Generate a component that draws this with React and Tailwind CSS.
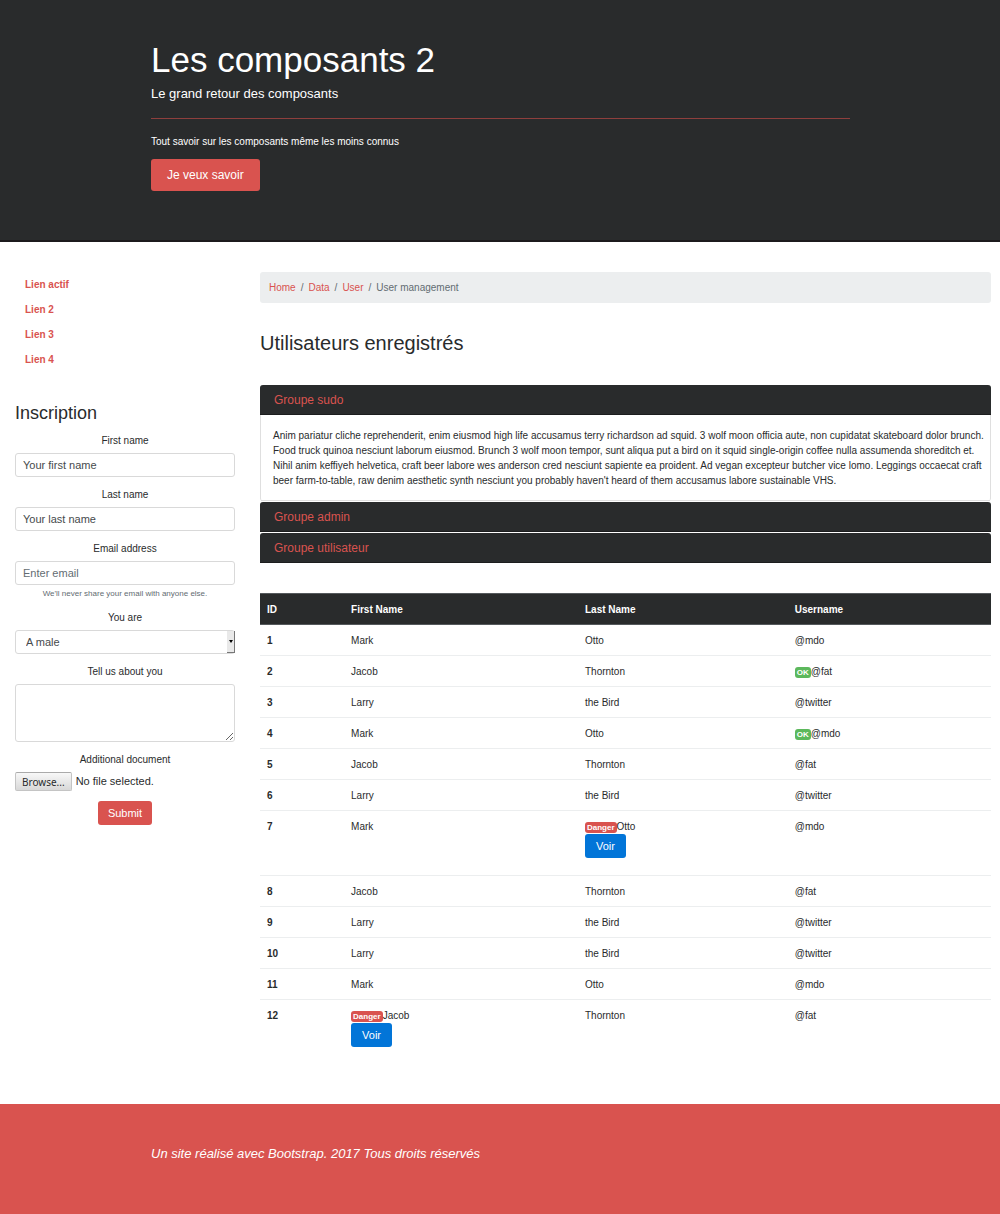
import React from 'react';

const links = ['Lien actif', 'Lien 2', 'Lien 3', 'Lien 4'];
const crumbs = ['Home', 'Data', 'User'];

const rows = [
  { id: 1, first: 'Mark', last: 'Otto', user: '@mdo' },
  { id: 2, first: 'Jacob', last: 'Thornton', user: '@fat', ok: true },
  { id: 3, first: 'Larry', last: 'the Bird', user: '@twitter' },
  { id: 4, first: 'Mark', last: 'Otto', user: '@mdo', ok: true },
  { id: 5, first: 'Jacob', last: 'Thornton', user: '@fat' },
  { id: 6, first: 'Larry', last: 'the Bird', user: '@twitter' },
  { id: 7, first: 'Mark', last: 'Otto', user: '@mdo', danger: 'last' },
  { id: 8, first: 'Jacob', last: 'Thornton', user: '@fat' },
  { id: 9, first: 'Larry', last: 'the Bird', user: '@twitter' },
  { id: 10, first: 'Larry', last: 'the Bird', user: '@twitter' },
  { id: 11, first: 'Mark', last: 'Otto', user: '@mdo' },
  { id: 12, first: 'Jacob', last: 'Thornton', user: '@fat', danger: 'first' },
];

const fieldClass =
  'block w-full rounded-[3px] border border-[#d9d9d9] bg-white text-[11px] text-[#464a4c]';

function Field({ id, label, children }) {
  return (
    <div className="mb-[10px]">
      <label htmlFor={id} className="mb-[5px] block text-center leading-[15px]">
        {label}
      </label>
      {children}
    </div>
  );
}

function DangerCell({ name }) {
  return (
    <td className="px-[7px] pt-2 pb-[17px] align-top">
      <div>
        <span className="inline-block rounded-[3px] bg-[#d9534f] px-[2px] text-[8px] leading-[11px] font-bold text-white">
          Danger
        </span>
        {name}
      </div>
      <button
        type="button"
        className="block h-6 rounded-[3px] bg-[#0275d8] px-[11px] text-[11px] leading-[22px] text-white"
      >
        Voir
      </button>
    </td>
  );
}

function Cell({ children }) {
  return <td className="px-[7px] pt-2 pb-[7px] align-top">{children}</td>;
}

function Group({ title, children }) {
  return (
    <div className="mb-px rounded-[3px] border-x border-[#dfdfdf]">
      <h5 className="-mx-px h-[30px] rounded-t-[3px] border-b border-[#1c1d1e] bg-[#292b2c] px-[14px] text-[12px] leading-[30px]">
        <a href="#groupe" className="text-[#d9534f]">
          {title}
        </a>
      </h5>
      {children}
    </div>
  );
}

export default function App() {
  return (
    <div className="bg-white font-['Liberation_Sans',Arial,sans-serif] text-[10px] leading-[15px] text-[#292b2c]">
      <header className="border-b-2 border-[#1c1a1d] bg-[#292b2c] pt-[39px] pb-[49px] text-white">
        <div className="mx-auto w-[70%] pl-px">
          <h1 className="text-[35px] leading-[42px]">Les composants 2</h1>
          <p className="mt-1 text-[13px] leading-[18px]">Le grand retour des composants</p>
          <hr className="mt-[15px] mb-[15px] border-[#8e3f3d]" />
          <p>Tout savoir sur les composants même les moins connus</p>
          <button
            type="button"
            className="mt-[10px] block h-8 rounded-[3px] bg-[#d9534f] px-4 text-[12px] leading-[32px]"
          >
            Je veux savoir
          </button>
        </div>
      </header>

      <div className="grid grid-cols-[1fr_3fr] pt-[30px] pb-10">
        <aside className="px-[15px]">
          <nav className="flex flex-col">
            {links.map((l) => (
              <a key={l} href="#lien" className="px-[10px] py-[5px] font-bold text-[#d9534f]">
                {l}
              </a>
            ))}
          </nav>

          <form className="mt-[30px]">
            <h3 className="mb-[9px] text-[18px] leading-[22px]">Inscription</h3>
            <Field id="first" label="First name">
              <input
                id="first"
                type="text"
                placeholder="Your first name"
                className={fieldClass + ' h-6 px-[7px] placeholder:text-[#464a4c]'}
              />
            </Field>
            <Field id="last" label="Last name">
              <input
                id="last"
                type="text"
                placeholder="Your last name"
                className={fieldClass + ' h-6 px-[7px] placeholder:text-[#464a4c]'}
              />
            </Field>
            <Field id="email" label="Email address">
              <input
                id="email"
                type="email"
                placeholder="Enter email"
                className={fieldClass + ' h-6 px-[7px] placeholder:text-[#636c72]'}
              />
              <small className="mt-[3px] block text-center text-[8px] leading-[12px] text-[#636c72]">
                We'll never share your email with anyone else.
              </small>
            </Field>
            <Field id="gender" label="You are">
              <div className="relative">
                <select id="gender" className={fieldClass + ' h-6 appearance-none px-[10px]'}>
                  <option>A male</option>
                  <option>A female</option>
                </select>
                <span className="pointer-events-none absolute inset-y-px right-0 flex w-2 items-center justify-center border-r border-b border-[#777777] bg-[#e9e9e9]">
                  <svg width="4" height="3" viewBox="0 0 4 3" aria-hidden="true">
                    <path d="M0 0h4L2 3z" fill="#000" />
                  </svg>
                </span>
              </div>
            </Field>
            <Field id="about" label="Tell us about you">
              <textarea id="about" className={fieldClass + ' h-[58px] p-[7px]'} />
            </Field>
            <Field id="doc" label="Additional document">
              <label htmlFor="doc" className="flex items-center gap-1 text-[11px]">
                <span className="h-[19px] rounded-[2px] border border-[#c4c4c4] border-t-[#aaaaaa] bg-linear-to-b from-[#f8f8f8] to-[#d8d8d8] px-[6px] font-['Noto_Sans',sans-serif] text-[10px] leading-[18px]">
                  Browse...
                </span>
                No file selected.
              </label>
              <input id="doc" type="file" className="sr-only" />
            </Field>
            <button
              type="submit"
              className="mx-auto block h-6 rounded-[3px] bg-[#d9534f] px-[10px] text-[11px] leading-[24px] text-white"
            >
              Submit
            </button>
          </form>
        </aside>

        <main className="pr-[9px] pl-[10px]">
          <nav
            aria-label="Breadcrumb"
            className="flex h-[31px] items-center rounded-[3px] bg-[#eceeef] px-[9px] text-[#636c72]"
          >
            {crumbs.map((c) => (
              <React.Fragment key={c}>
                <a href="#crumb" className="text-[#d9534f]">
                  {c}
                </a>
                <span className="px-[5px]">/</span>
              </React.Fragment>
            ))}
            <span>User management</span>
          </nav>

          <h2 className="mt-[28px] mb-[30px] text-[20px] leading-[24px]">Utilisateurs enregistrés</h2>

          <Group title="Groupe sudo">
            <p className="border-b border-[#dfdfdf] pt-[13px] pr-1 pb-3 pl-3">
              Anim pariatur cliche reprehenderit, enim eiusmod high life accusamus terry richardson ad
              squid. 3 wolf moon officia aute, non cupidatat skateboard dolor brunch. Food truck quinoa
              nesciunt laborum eiusmod. Brunch 3 wolf moon tempor, sunt aliqua put a bird on it squid
              single-origin coffee nulla assumenda shoreditch et. Nihil anim keffiyeh helvetica, craft
              beer labore wes anderson cred nesciunt sapiente ea proident. Ad vegan excepteur butcher
              vice lomo. Leggings occaecat craft beer farm-to-table, raw denim aesthetic synth nesciunt
              you probably haven't heard of them accusamus labore sustainable VHS.
            </p>
          </Group>
          <Group title="Groupe admin" />
          <Group title="Groupe utilisateur" />

          <table className="mt-[30px] w-full table-fixed text-left">
            <colgroup>
              <col className="w-[11.5%]" />
              <col className="w-[32%]" />
              <col className="w-[28.7%]" />
              <col />
            </colgroup>
            <thead>
              <tr className="border-y border-[#55595c] bg-[#292b2c] text-white">
                {['ID', 'First Name', 'Last Name', 'Username'].map((h) => (
                  <th key={h} className="px-[7px] pt-2 pb-[7px] font-bold">
                    {h}
                  </th>
                ))}
              </tr>
            </thead>
            <tbody>
              {rows.map((r) => (
                <tr key={r.id} className="border-t border-[#eceeef]">
                  <th scope="row" className="px-[7px] pt-2 pb-[7px] align-top font-bold">
                    {r.id}
                  </th>
                  {r.danger === 'first' ? <DangerCell name={r.first} /> : <Cell>{r.first}</Cell>}
                  {r.danger === 'last' ? <DangerCell name={r.last} /> : <Cell>{r.last}</Cell>}
                  <Cell>
                    {r.ok && (
                      <span className="inline-block rounded-[3px] bg-[#5cb85c] px-[2px] text-[8px] leading-[11px] font-bold text-white">
                        OK
                      </span>
                    )}
                    {r.user}
                  </Cell>
                </tr>
              ))}
            </tbody>
          </table>
        </main>
      </div>

      <footer className="bg-[#d9534f] pt-10 pb-[50px] text-white">
        <p className="mx-auto w-[70%] pl-px text-[13px] leading-[20px] italic">
          Un site réalisé avec Bootstrap. 2017 Tous droits réservés
        </p>
      </footer>
    </div>
  );
}
